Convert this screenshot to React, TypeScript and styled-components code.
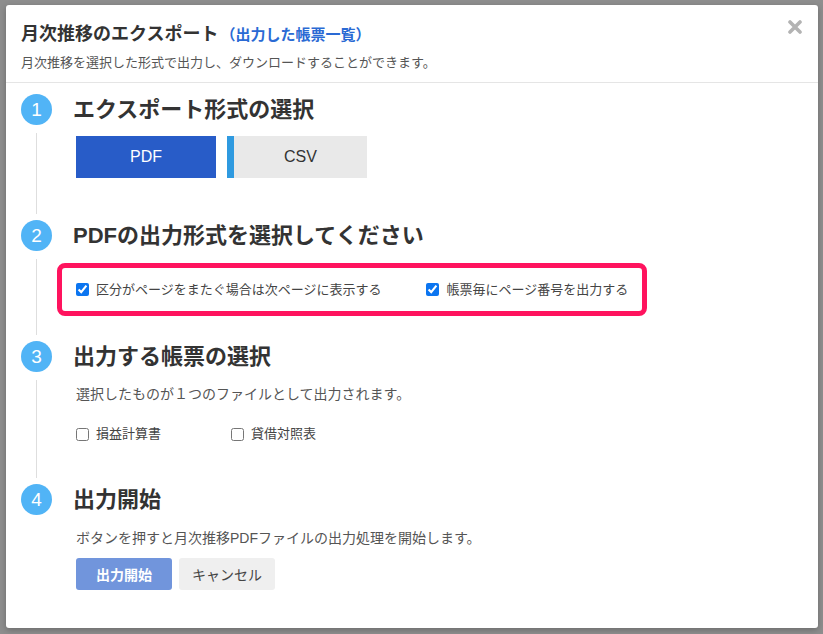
import styled, { createGlobalStyle } from 'styled-components';

const GlobalStyle = createGlobalStyle`
    html, body {
        margin: 0;
        padding: 0;
    }
    body {
        font-family: "Liberation Sans", "Noto Sans CJK JP", sans-serif;
        color: #333;
    }
`;

const Backdrop = styled.div`
    width: 823px;
    height: 634px;
    background: #8e8e8e;
    overflow: hidden;
    padding: 5px 0 0 6px;
    box-sizing: border-box;
`;

const Dialog = styled.div`
    width: 812px;
    height: 623px;
    background: #fff;
    border-radius: 3px;
    box-shadow: 0 2px 6px rgba(0, 0, 0, 0.25);
    display: flex;
    flex-direction: column;
    position: relative;
`;

const Header = styled.header`
    padding: 17px 15px 9px;
    border-bottom: 1px solid #e5e5e5;
`;

const Title = styled.h1`
    margin: 0;
    font-size: 18px;
    line-height: 24px;
    font-weight: 700;
    color: #333;
`;

const TitleLink = styled.a`
    font-size: 15px;
    color: #2a6ad4;
    text-decoration: none;
    margin-left: 2px;
`;

const Subtitle = styled.p`
    margin: 6px 0 0;
    font-size: 13px;
    line-height: 20px;
    color: #555;
`;

const CloseButton = styled.button`
    position: absolute;
    top: 14px;
    right: 15px;
    width: 16px;
    height: 16px;
    padding: 0;
    border: none;
    background: none;
    cursor: pointer;
    display: flex;
    align-items: center;
    justify-content: center;
`;

const Body = styled.div`
    padding: 11px 15px 0;
    display: flex;
    flex-direction: column;
`;

const StepRow = styled.section<{ $pb: number }>`
    display: flex;
    gap: 21px;
    padding-bottom: ${props => props.$pb}px;
`;

const Rail = styled.div<{ $pb: number }>`
    width: 31px;
    display: flex;
    flex-direction: column;
    align-items: center;
    margin-bottom: -${props => props.$pb}px;
`;

const Circle = styled.div`
    width: 31px;
    height: 31px;
    border-radius: 50%;
    background: #51b4f6;
    color: #fff;
    font-size: 19px;
    line-height: 31px;
    text-align: center;
    flex-shrink: 0;
`;

const RailLine = styled.div`
    flex: 1;
    width: 1px;
    background: #dedede;
    margin: 8px 0 6px;
`;

const StepContent = styled.div`
    flex: 1;
    display: flex;
    flex-direction: column;
`;

const StepTitle = styled.h2`
    margin: 0;
    font-size: 22px;
    line-height: 31px;
    font-weight: 700;
    color: #333;
`;

const Indent = styled.div<{ $mt: number }>`
    padding-left: 3px;
    margin-top: ${props => props.$mt}px;
`;

const FormatButtons = styled.div`
    display: flex;
    gap: 11px;
`;

const FormatButton = styled.button<{ $active?: boolean }>`
    width: 140px;
    height: 42px;
    border: none;
    border-radius: 0;
    font-family: inherit;
    font-size: 16px;
    cursor: pointer;
    background: ${props => (props.$active ? '#285cc8' : '#e9e9e9')};
    color: ${props => (props.$active ? '#fff' : '#333')};
    border-left: ${props => (props.$active ? 'none' : '7px solid #2f9ae0')};
    padding: 0;
`;

const HighlightBox = styled.div`
    margin: 12px 0 0 -16px;
    width: 590px;
    height: 53px;
    box-sizing: border-box;
    border: 5px solid #ff135e;
    border-radius: 8px;
    padding: 0 0 0 14px;
    display: flex;
    align-items: center;
    white-space: nowrap;
`;

const OptionRow = styled.div<{ $gap: number }>`
    display: flex;
    align-items: center;
    gap: ${props => props.$gap}px;
`;

const Option = styled.label<{ $width?: number }>`
    display: flex;
    align-items: center;
    gap: 7px;
    flex-shrink: 0;
    white-space: nowrap;
    font-size: 13px;
    line-height: 20px;
    color: #444;
    cursor: pointer;
    min-width: ${props => (props.$width ? `${props.$width}px` : 'auto')};
`;

const Check = styled.input`
    width: 13px;
    height: 13px;
    margin: 0;
    flex-shrink: 0;
    accent-color: #0b75f0;
`;

const Description = styled.p<{ $mt: number }>`
    margin: ${props => props.$mt}px 0 0;
    padding-left: 3px;
    font-size: 14px;
    line-height: 20px;
    color: #555;
`;

const Actions = styled.div`
    display: flex;
    gap: 7px;
    margin-top: 10px;
    padding-left: 3px;
`;

const ActionButton = styled.button<{ $primary?: boolean }>`
    width: 96px;
    height: 32px;
    border: none;
    border-radius: 3px;
    font-family: inherit;
    font-size: 14px;
    cursor: pointer;
    font-weight: ${props => (props.$primary ? 700 : 400)};
    background: ${props => (props.$primary ? '#7195dc' : '#efefef')};
    color: ${props => (props.$primary ? '#fff' : '#444')};
`;

interface StepProps {
    number: number;
    title: string;
    last?: boolean;
    pb: number;
    children: React.ReactNode;
}

const Step = ({ number, title, last, pb, children }: StepProps) => (
    <StepRow $pb={pb}>
        <Rail $pb={pb}>
            <Circle>{number}</Circle>
            {!last && <RailLine />}
        </Rail>
        <StepContent>
            <StepTitle>{title}</StepTitle>
            {children}
        </StepContent>
    </StepRow>
);

const App = () => {
    return (
        <Backdrop>
            <GlobalStyle />
            <Dialog>
                <Header>
                    <Title>
                        月次推移のエクスポート<TitleLink href="#">（出力した帳票一覧）</TitleLink>
                    </Title>
                    <Subtitle>月次推移を選択した形式で出力し、ダウンロードすることができます。</Subtitle>
                </Header>
                <CloseButton aria-label="閉じる">
                    <svg width="14" height="14" viewBox="0 0 14 14">
                        <path d="M2 2 L12 12 M12 2 L2 12" stroke="#b3b3b3" strokeWidth="3.6" strokeLinecap="round" />
                    </svg>
                </CloseButton>
                <Body>
                    <Step number={1} title="エクスポート形式の選択" pb={42}>
                        <Indent $mt={11}>
                            <FormatButtons>
                                <FormatButton $active>PDF</FormatButton>
                                <FormatButton>CSV</FormatButton>
                            </FormatButtons>
                        </Indent>
                    </Step>
                    <Step number={2} title="PDFの出力形式を選択してください" pb={25}>
                        <HighlightBox>
                            <OptionRow $gap={45}>
                                <Option>
                                    <Check type="checkbox" defaultChecked />
                                    区分がページをまたぐ場合は次ページに表示する
                                </Option>
                                <Option>
                                    <Check type="checkbox" defaultChecked />
                                    帳票毎にページ番号を出力する
                                </Option>
                            </OptionRow>
                        </HighlightBox>
                    </Step>
                    <Step number={3} title="出力する帳票の選択" pb={40}>
                        <Description $mt={12}>選択したものが１つのファイルとして出力されます。</Description>
                        <Indent $mt={20}>
                            <OptionRow $gap={0}>
                                <Option $width={155}>
                                    <Check type="checkbox" />
                                    損益計算書
                                </Option>
                                <Option>
                                    <Check type="checkbox" />
                                    貸借対照表
                                </Option>
                            </OptionRow>
                        </Indent>
                    </Step>
                    <Step number={4} title="出力開始" last pb={0}>
                        <Description $mt={13}>ボタンを押すと月次推移PDFファイルの出力処理を開始します。</Description>
                        <Actions>
                            <ActionButton $primary>出力開始</ActionButton>
                            <ActionButton>キャンセル</ActionButton>
                        </Actions>
                    </Step>
                </Body>
            </Dialog>
        </Backdrop>
    );
};

export default App;
